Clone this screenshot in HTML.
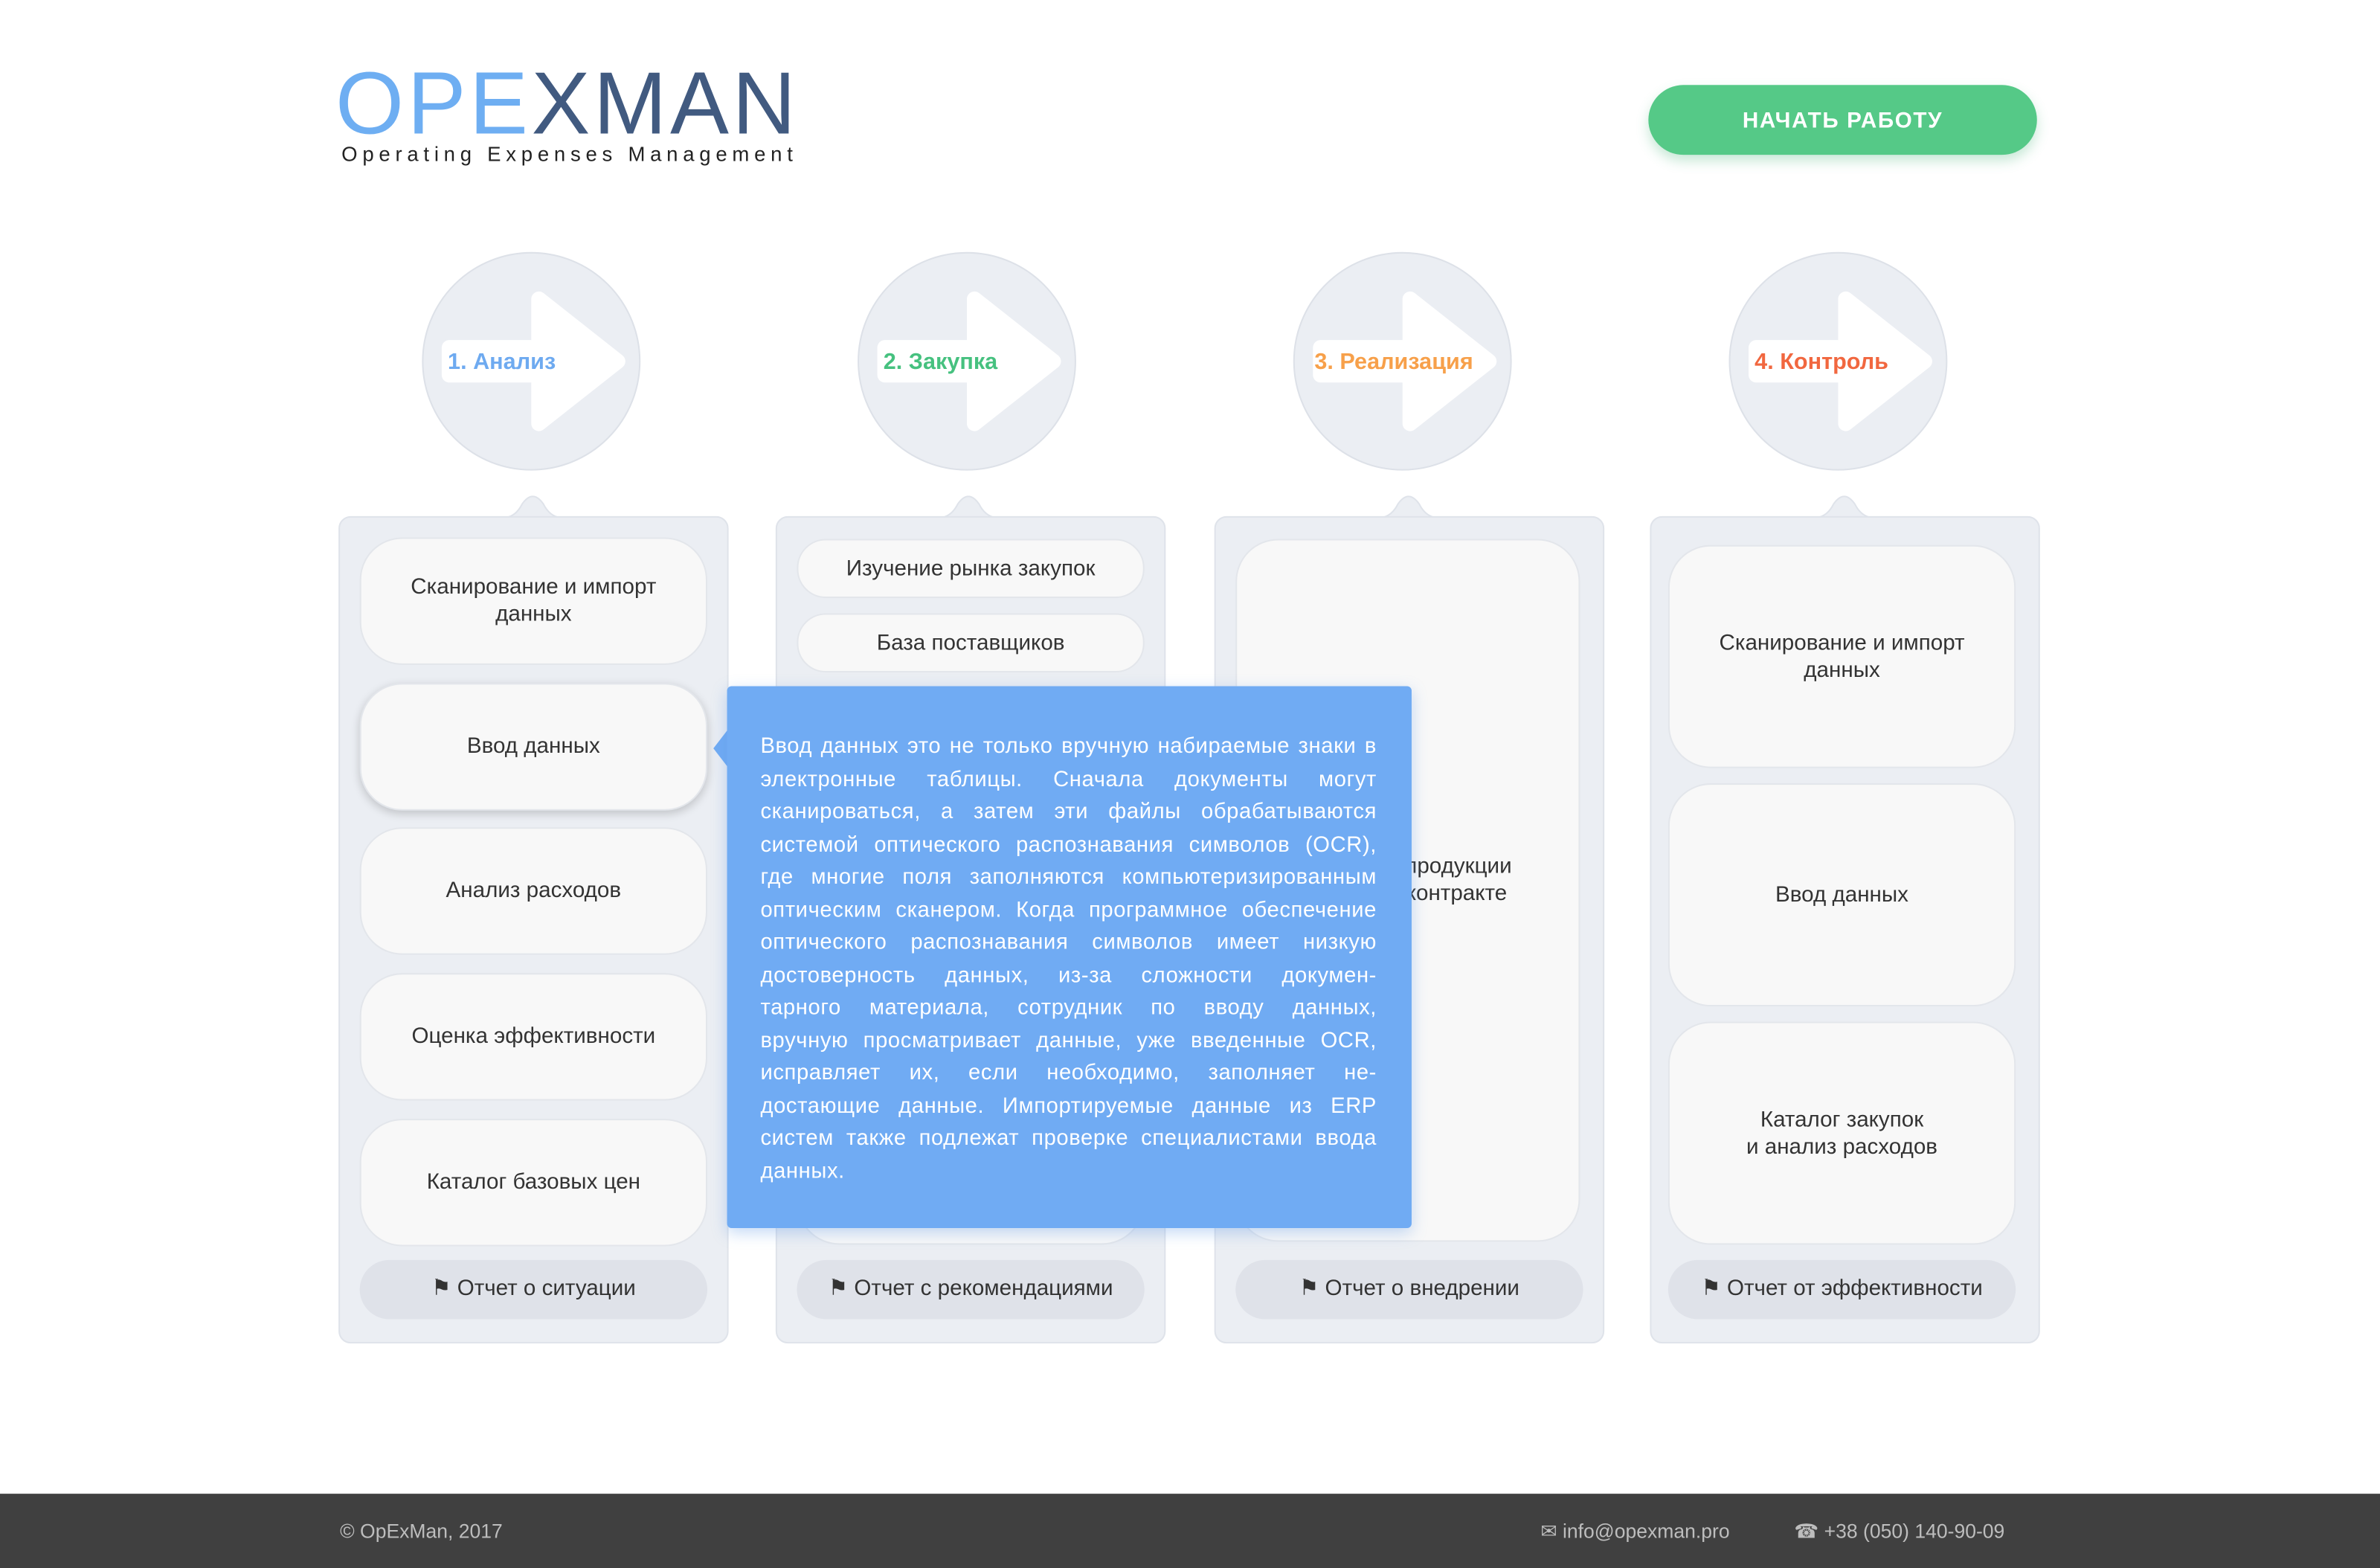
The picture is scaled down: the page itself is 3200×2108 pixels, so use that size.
<!DOCTYPE html>
<html><head><meta charset="utf-8"><style>
html,body{margin:0;padding:0;background:#fff;width:3200px;height:2108px;overflow:hidden}
#w{position:absolute;left:0;top:0;width:1568px;height:1033px;transform:scale(2.040816);transform-origin:0 0;font-family:"Liberation Sans","DejaVu Sans",sans-serif;color:#333}
.abs{position:absolute}
.logo{left:221px;top:38px;font-size:58px;line-height:62px;letter-spacing:2.2px;color:#6eaef2}
.logo b{font-weight:normal;color:#415a80}
.sub{left:225px;top:94px;font-size:13.5px;letter-spacing:3.3px;color:#222}
.btn{left:1086px;top:56px;width:256px;height:46px;border-radius:23px;background:#55c987;color:#fff;font-weight:bold;font-size:14.5px;letter-spacing:.8px;text-align:center;line-height:48px;box-shadow:0 4px 8px rgba(70,180,120,.3)}
.circ{width:142px;height:142px;border-radius:50%;background:#ebeef3;border:1px solid #dde1e8}
.lbl{font-weight:bold;font-size:15px}
.col{width:255px;height:543px;background:#ebeef3;border:1px solid #dfe3ea;border-radius:8px}
.it{position:absolute;left:13px;width:227px;background:#f8f8f8;border:1px solid #e3e6eb;border-radius:28px;display:flex;align-items:center;justify-content:center;text-align:center;font-size:14.5px;line-height:18px;color:#333}
.rep{position:absolute;left:13px;top:489px;width:229px;height:39px;border-radius:20px;background:#dfe2e9;text-align:center;line-height:39px;font-size:14.5px;color:#333}
.tip{left:479px;top:452px;width:451px;height:357px;background:#70abf3;border-radius:3px;box-shadow:0 3px 10px rgba(90,150,230,.35);color:#fff;font-size:14.3px;line-height:21.5px;box-sizing:border-box;padding:30px 23px 0 22px;letter-spacing:.3px}
.tip div{text-align:justify;text-align-last:justify;white-space:nowrap}
.tip div.l{text-align-last:left}
.foot{left:0;top:984px;width:1568px;height:49px;background:#404040;color:#bdbdbd;font-size:13px}
</style></head><body><div id="w">
<div class="abs logo">OPE<b>XMAN</b></div>
<div class="abs sub">Operating Expenses Management</div>
<div class="abs btn">НАЧАТЬ РАБОТУ</div>

<div class="abs circ" style="left:278px;top:166px"></div>
<div class="abs circ" style="left:565px;top:166px"></div>
<div class="abs circ" style="left:852px;top:166px"></div>
<div class="abs circ" style="left:1139px;top:166px"></div>
<svg class="abs" style="left:0;top:0" width="1568" height="400">
<g fill="#fff" stroke="#fff" stroke-width="10" stroke-linejoin="round">
<path d="M296 229H355V197L407 238L355 279V247H296Z"/>
<path d="M583 229H642V197L694 238L642 279V247H583Z"/>
<path d="M870 229H929V197L981 238L929 279V247H870Z"/>
<path d="M1157 229H1216V197L1268 238L1216 279V247H1157Z"/>
</g>
<g fill="#ebeef3" stroke="#dfe3ea" stroke-width="1">
<path d="M333 341Q340 340 344 332Q351 322 358 332Q362 340 369 341"/>
<path d="M620 341Q627 340 631 332Q638 322 645 332Q649 340 656 341"/>
<path d="M910 341Q917 340 921 332Q928 322 935 332Q939 340 946 341"/>
<path d="M1197 341Q1204 340 1208 332Q1215 322 1222 332Q1226 340 1233 341"/>
</g>
</svg>
<div class="abs lbl" style="left:295px;top:230px;color:#6eaaf0">1. Анализ</div>
<div class="abs lbl" style="left:582px;top:230px;color:#46c17f">2. Закупка</div>
<div class="abs lbl" style="left:866px;top:230px;color:#f7a04a">3. Реализация</div>
<div class="abs lbl" style="left:1156px;top:230px;color:#f1673f">4. Контроль</div>

<div class="abs col" style="left:223px;top:340px">
 <div class="it" style="top:13px;height:82px">Сканирование и импорт<br>данных</div>
 <div class="it" style="top:109px;height:82px;box-shadow:0 2px 6px rgba(0,0,0,.18)">Ввод данных</div>
 <div class="it" style="top:204px;height:82px">Анализ расходов</div>
 <div class="it" style="top:300px;height:82px">Оценка эффективности</div>
 <div class="it" style="top:396px;height:82px">Каталог базовых цен</div>
 <div class="rep">⚑ Отчет о ситуации</div>
</div>
<div class="abs col" style="left:511px;top:340px">
 <div class="it" style="top:14px;height:37px;border-radius:19px">Изучение рынка закупок</div>
 <div class="it" style="top:63px;height:37px;border-radius:19px">База поставщиков</div>
 <div class="it" style="top:112px;height:365px"></div>
 <div class="rep">⚑ Отчет с рекомендациями</div>
</div>
<div class="abs col" style="left:800px;top:340px">
 <div class="it" style="top:14px;height:463px;padding-bottom:14px;box-sizing:border-box">Поставка продукции<br>согласно контракте</div>
 <div class="rep">⚑ Отчет о внедрении</div>
</div>
<div class="abs col" style="left:1087px;top:340px">
 <div class="it" style="top:18px;height:145px;left:11px">Сканирование и импорт<br>данных</div>
 <div class="it" style="top:175px;height:145px;left:11px">Ввод данных</div>
 <div class="it" style="top:332px;height:145px;left:11px">Каталог закупок<br>и анализ расходов</div>
 <div class="rep" style="left:11px">⚑ Отчет от эффективности</div>
</div>

<svg class="abs" style="left:468px;top:480px" width="14" height="26"><path d="M12 0L2 13L12 26Z" fill="#70abf3"/></svg>
<div class="abs tip">
<div>Ввод данных это не только вручную набираемые знаки в</div>
<div>электронные таблицы. Сначала документы могут</div>
<div>сканироваться, а затем эти файлы обрабатываются</div>
<div>системой оптического распознавания символов (OCR),</div>
<div>где многие поля заполняются компьютеризированным</div>
<div>оптическим сканером. Когда программное обеспечение</div>
<div>оптического распознавания символов имеет низкую</div>
<div>достоверность данных, из-за сложности докумен-</div>
<div>тарного материала, сотрудник по вводу данных,</div>
<div>вручную просматривает данные, уже введенные OCR,</div>
<div>исправляет их, если необходимо, заполняет не-</div>
<div>достающие данные. Импортируемые данные из ERP</div>
<div>систем также подлежат проверке специалистами ввода</div>
<div class="l">данных.</div>
</div>

<div class="abs foot">
 <div class="abs" style="left:224px;top:17px">© OpExMan, 2017</div>
 <div class="abs" style="left:1015px;top:17px">✉ info@opexman.pro</div>
 <div class="abs" style="left:1182px;top:17px">☎ +38 (050) 140-90-09</div>
</div>
</div></body></html>
